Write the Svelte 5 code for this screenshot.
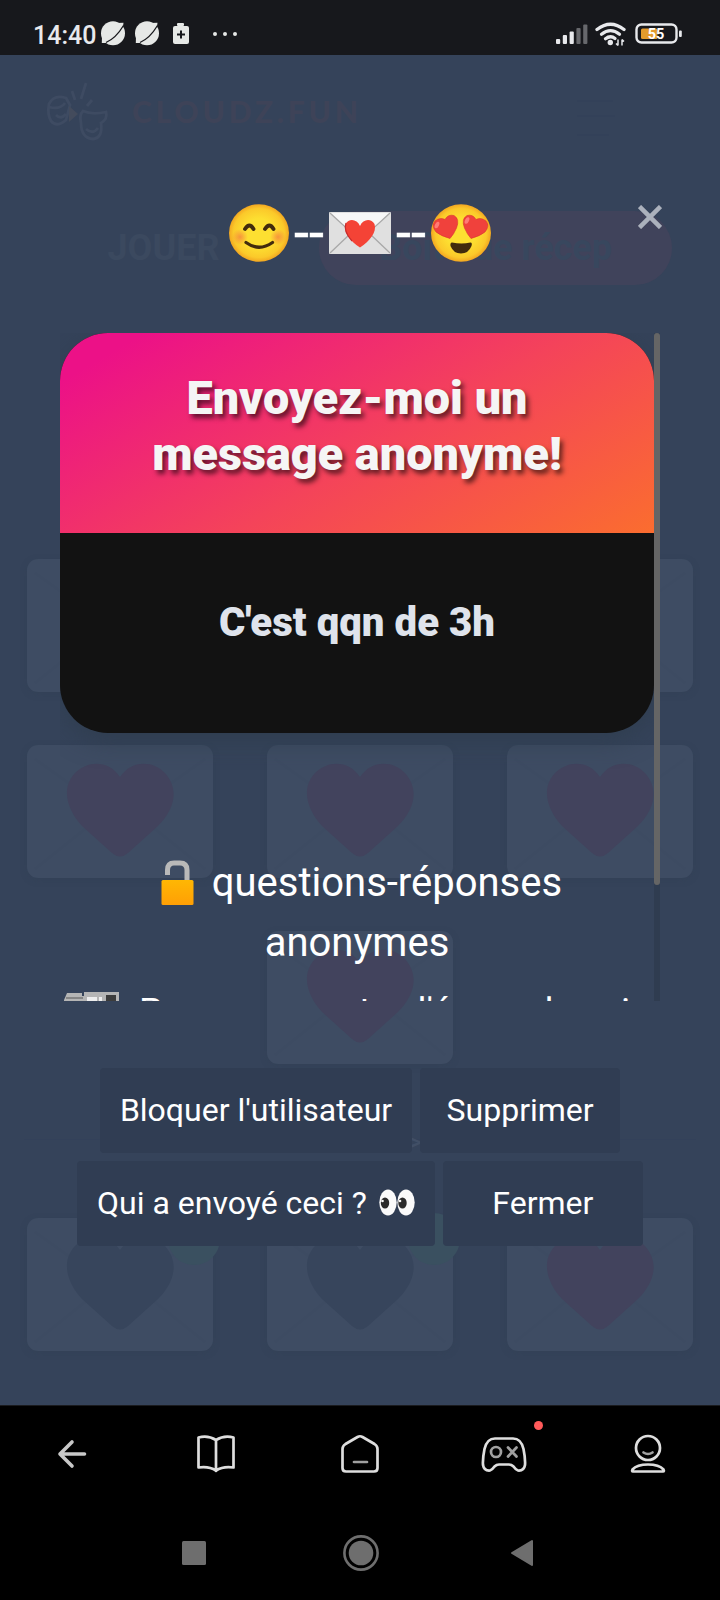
<script lang="ts">
  type Card = { column: number; opened?: boolean };

  const recent: Card[] = [
    { column: 1 }, { column: 2 }, { column: 3 },
    { column: 1 }, { column: 2 }, { column: 3 },
    { column: 2 },
  ];

  const older: Card[] = [
    { column: 1, opened: true },
    { column: 2, opened: true },
    { column: 3 },
  ];

  const signal = [5, 9, 12.5, 16, 19.5];
</script>

{#snippet planet()}
  <svg class="planet" width="26" height="26" viewBox="0 0 26 26">
    <circle cx="13" cy="12.3" r="12" fill="#e6e8e6" />
    <path d="M2 15L1.8 22 8 22zM16 2L23.500 1.8 22.500 9z" fill="#e6e8e6" />
    <path d="M6 21.5C13 18.500 19 12 23.500 4.500" fill="none" stroke="#17181c" stroke-width="1.3" />
  </svg>
{/snippet}

{#snippet envelopes(cards: Card[])}
  <div class="envelopes">
    {#each cards as card}
      <div class="envelope" style="grid-column: {card.column}">
        <svg width="186" height="133" viewBox="0 0 186 133">
          <path d="M8 14L75 62M178 14L111 62M8 124L68 76M178 124L118 76" stroke="#3a485f" stroke-width="2" opacity=".12" />
          <path
            d="M93 32C82 15 61 15 48 28C33 44 41 66 55 81L85 108Q93 115 101 108L131 81C147 65 153 45 138 28C126 15 104 15 93 32Z"
            fill={card.opened ? '#37455c' : '#42435d'}
          />
        </svg>
        {#if card.opened}
          <span class="badge"></span>
        {/if}
      </div>
    {/each}
  </div>
{/snippet}

<div class="phone">
  <header class="status">
    <span class="clock">14:40</span>
    {@render planet()}
    {@render planet()}
    <svg class="battery-saver" width="18" height="22" viewBox="0 0 18 22">
      <rect x="5" y="0" width="7" height="3" rx="1" fill="#e6e8e6" />
      <rect x="1" y="3" width="16" height="18" rx="2" fill="#e6e8e6" />
      <path d="M9 7.5v8M5 11.5h8" stroke="#17181c" stroke-width="2" />
    </svg>
    <svg class="more" width="26" height="6" viewBox="0 0 26 6" fill="#e6e8e6">
      <circle cx="3" cy="3" r="2" /><circle cx="13" cy="3" r="2" /><circle cx="23" cy="3" r="2" />
    </svg>
    <div class="status-right">
      <svg width="32" height="22" viewBox="0 0 32 22">
        {#each signal as height, i}
          <rect x={i * 6.8} y={21 - height} width="4.2" {height} rx="1" fill={i < 3 ? '#e8e9ec' : '#67686c'} />
        {/each}
      </svg>
      <svg class="wifi" width="31" height="25" viewBox="0 0 31 25">
        <g fill="none" stroke="#e8e9ec" stroke-width="3.3" stroke-linecap="round">
          <path d="M2 7.500Q15.500-3 29 7.500" />
          <path d="M6.500 12.300Q15.500 5 24.500 12.300" />
          <path d="M10.500 16.800Q15.500 12.800 20 16.500" />
        </g>
        <circle cx="15.3" cy="20.500" r="2.700" fill="#e8e9ec" />
        <path d="M23 17.500v6M27 17.500v6M21 21.500l2 2M29 19.500l-2-2" stroke="#e8e9ec" stroke-width="1.500" fill="none" />
      </svg>
      <svg width="48" height="22" viewBox="0 0 48 22">
        <rect x="1.5" y="1.5" width="40" height="18" rx="5" fill="none" stroke="#e8e9ec" stroke-width="2.4" />
        <rect x="6" y="5.500" width="16.500" height="10.500" rx="1.500" fill="#e39a2c" />
        <rect x="44" y="7.500" width="2.800" height="6.500" rx="1" fill="#e8e9ec" />
        <text x="21" y="15.600" text-anchor="middle" class="battery-text">55</text>
      </svg>
    </div>
  </header>

  <main class="page">
    <div class="background">
      <div class="brand">
        <svg width="66" height="62" viewBox="0 0 66 62" fill="none" stroke="#3e4b62" stroke-width="2.800">
          <path d="M4 24Q9 14 21 18L25 25 21 40Q12 48 6 41Q2 34 4 24ZM4 27Q15 30 20 23" />
          <path d="M24 26L33 34 24 42Z" fill="#434b5c" stroke="none" />
          <path d="M38 31Q47 35 61 32Q63 39 56 43Q58 58 48 59Q36 58 36 43Q34 35 38 31Z" />
          <path d="M11 35q5 5 10-1M41 49q7 6 12-1M27 11l3 9M41 3l-5 16M47 20l-5 6" />
        </svg>
        <span>CLOUDZ.FUN</span>
        <svg class="menu" width="40" height="40" viewBox="0 0 40 40" stroke="#334158" stroke-width="1">
          <path d="M1 4h36M1 19h38M1 38h32" />
        </svg>
      </div>
      <div class="tabs">
        <div class="tab play">JOUER</div>
        <div class="tab inbox">Boîte de récep</div>
      </div>
      {@render envelopes(recent)}
      <div class="divider"><span>&gt;</span></div>
      {@render envelopes(older)}
    </div>

    <div class="modal">
      <div class="modal-head">
        <svg width="60" height="58" viewBox="0 0 60 58">
          <defs>
            <radialGradient id="face">
              <stop offset=".5" stop-color="#fddf31" />
              <stop offset=".85" stop-color="#fbc92a" />
              <stop offset="1" stop-color="#f2a621" />
            </radialGradient>
            <radialGradient id="cheek">
              <stop offset="0" stop-color="#f5803f" stop-opacity=".75" />
              <stop offset="1" stop-color="#f5803f" stop-opacity="0" />
            </radialGradient>
          </defs>
          <ellipse cx="30" cy="29" rx="30" ry="28.800" fill="url(#face)" />
          <circle cx="11" cy="33" r="8" fill="url(#cheek)" />
          <circle cx="49" cy="33" r="8" fill="url(#cheek)" />
          <g fill="none" stroke="#422b0d" stroke-width="3.800" stroke-linecap="round">
            <path d="M16 25q4.500-7 8.500 0M36 25q4.500-7 8.500 0" />
            <path d="M17 38.500Q30 48 43.500 38.500" stroke-width="3.200" />
          </g>
        </svg>
        <span class="dashes">--</span>
        <svg class="letter" width="62" height="42" viewBox="0 0 62 42">
          <rect width="62" height="42" rx="1" fill="#e0e0e0" />
          <path d="M1 1h60L36 26Q31 30 26 26z" fill="#f7f7f7" />
          <path d="M1 1L26 24M61 1L36 24M1 41L21 22M61 41L41 22" stroke="#a9a9a9" stroke-width="1.300" />
          <path d="M31 14C28 7 20 6 16.500 12C14 20 21 29 31 35.500C41 29 48 20 45.500 12C42 6 34 7 31 14Z" fill="#f44336" />
          <path d="M17 11Q14 19 23 29" fill="none" stroke="#c72c2c" stroke-width="1.200" />
        </svg>
        <span class="dashes">--</span>
        <svg width="60" height="58" viewBox="0 0 60 58">
          <ellipse cx="30" cy="29" rx="30" ry="28.800" fill="url(#face)" />
          <path d="M21 38.500q9.500 2 18.500 0q2 0 1 3.500q-3 7.500-10.500 7.500t-10.500-7.500q-.500-3.500 1.500-3.500z" fill="#422b0d" />
          <g fill="#f0413c" stroke="#d8362f" stroke-width=".600">
            <path d="M14 15.500Q17 10 23 11.500Q29 15 25.500 24Q23 30 19 34.500Q10 32 5 28Q0 22 4 17Q9 13 14 15.500Z" />
            <path d="M45 15.500Q42 10 36 11.500Q30 15 33.500 24Q36 30 40 34.500Q49 32 54 28Q59 22 55 17Q50 13 45 15.500Z" />
          </g>
          <g fill="#ff7b75">
            <ellipse cx="6" cy="21" rx="2" ry="3.500" transform="rotate(25 6 21)" />
            <ellipse cx="36" cy="16.500" rx="2" ry="3.500" transform="rotate(25 36 16.500)" />
          </g>
        </svg>
        <button type="button" class="close" aria-label="Fermer">
          <svg width="24" height="24" viewBox="0 0 24 24" stroke="#abb1bc" stroke-width="4.500">
            <path d="M1.500 1.500L22.500 22.500M22.500 1.500L1.500 22.500" />
          </svg>
        </button>
      </div>

      <div class="scroller">
        <div class="content">
          <article class="message">
            <h2>Envoyez-moi un<br />message anonyme!</h2>
            <p>C'est qqn de 3h</p>
          </article>
          <div class="promo">
            <svg class="lock" width="33" height="46" viewBox="0 0 33 46">
              <defs>
                <linearGradient id="gold" x2="0" y2="1">
                  <stop offset="0" stop-color="#ffb703" />
                  <stop offset="1" stop-color="#ff9f05" />
                </linearGradient>
              </defs>
              <path d="M6.500 15V10Q6.500 3 13 3H19Q26 3 26 10V20" fill="none" stroke="#b9b9b9" stroke-width="5" />
              <rect x=".500" y="20" width="32" height="25" rx="1.500" fill="url(#gold)" />
            </svg>
            <span>questions-réponses</span><br />anonymes
          </div>
          <div class="news">
            <svg width="56" height="50" viewBox="0 0 56 50">
              <path d="M3 1H18V4H20V0H55V50H0V8z" fill="#b5b5b5" />
              <path d="M2 5H19V7H2z" fill="#858585" />
              <rect x="23" y="5" width="10" height="5" fill="#eee" />
              <rect x="35" y="5" width="3" height="5" fill="#eee" />
              <rect x="42" y="3" width="10" height="9" fill="#3c3c3c" />
            </svg>
            <span>Pour augmenter, l'écran de voir</span>
          </div>
        </div>
        <div class="scrollbar"><div class="thumb"></div></div>
      </div>

      <div class="actions">
        <button type="button">Bloquer l'utilisateur</button>
        <button type="button">Supprimer</button>
      </div>
      <div class="actions second">
        <button type="button">
          Qui a envoyé ceci ?
          <svg class="eyes" width="36" height="27" viewBox="0 0 36 27">
            <ellipse cx="9" cy="13.500" rx="8.700" ry="13" fill="#fafafa" />
            <ellipse cx="27" cy="13.500" rx="8.700" ry="13" fill="#fafafa" />
            <ellipse cx="6" cy="14" rx="4.200" ry="5.600" fill="#2b2b2b" />
            <ellipse cx="23.500" cy="14" rx="4.200" ry="5.600" fill="#2b2b2b" />
            <circle cx="3.500" cy="12" r="1.300" fill="#fafafa" />
            <circle cx="21" cy="12" r="1.300" fill="#fafafa" />
          </svg>
        </button>
        <button type="button">Fermer</button>
      </div>
    </div>
  </main>

  <nav class="app-nav">
    <div class="nav-item">
      <svg width="40" height="40" viewBox="0 0 40 40">
        <path d="M32.500 20H8M20 8L8 20L20 32" />
      </svg>
    </div>
    <div class="nav-item">
      <svg width="40" height="40" viewBox="0 0 40 40">
        <path d="M20 6Q12 1 2.500 3.500V33.500Q13 32 20 36.500Q27 32 37.500 33.500V3.500Q28 1 20 6ZM20 6V37" />
      </svg>
    </div>
    <div class="nav-item">
      <svg width="40" height="40" viewBox="0 0 40 40">
        <path d="M17.500 3Q20 1.500 22.500 3L34.500 10Q37.500 12 37.500 15V34Q37.500 37.500 34 37.500H6Q2.500 37.500 2.500 34V15Q2.500 12 5.500 10Z" />
        <path d="M14 28H27" class="dim" />
      </svg>
    </div>
    <div class="nav-item">
      <svg width="46" height="40" viewBox="0 0 46 40">
        <path d="M14 4.500H32Q40 4.500 42.500 15Q44.500 25 44 31Q43 37 37 36.500Q35 36 32.500 32.500Q30.500 30.500 28 30.500H18Q15.500 30.500 13.500 32.500Q11 36 9 36.500Q3 37 2 31Q1.500 25 3.500 15Q6 4.500 14 4.500Z" />
        <circle cx="15" cy="18" r="5" class="dim" />
        <path d="M27 13.500L35.500 22.500M35.500 13.500L27 22.500" class="dim" />
      </svg>
      <span class="dot"></span>
    </div>
    <div class="nav-item">
      <svg width="40" height="40" viewBox="0 0 40 40">
        <circle cx="20" cy="14" r="12" />
        <path d="M15.500 18.500Q20 21.500 24.500 18.500" class="dim" />
        <path d="M5 37.500Q3.500 37.500 4.500 35.500Q9 30.500 20 30.500T35.500 35.500Q36.500 37.500 35 37.500Z" />
      </svg>
    </div>
  </nav>

  <footer class="system-nav">
    <svg width="24" height="24" viewBox="0 0 24 24"><rect width="24" height="24" rx="1.500" fill="#6e6e6e" /></svg>
    <svg class="home" width="36" height="36" viewBox="0 0 36 36">
      <circle cx="18" cy="18" r="16.600" fill="none" stroke="#6e6e6e" stroke-width="2.600" />
      <circle cx="18" cy="18" r="12.300" fill="#6e6e6e" />
    </svg>
    <svg width="24" height="28" viewBox="0 0 24 28">
      <path d="M22 2V26L2 14Z" fill="#6e6e6e" stroke="#6e6e6e" stroke-width="2" stroke-linejoin="round" />
    </svg>
  </footer>
</div>

<style>
  :global(body) {
    margin: 0;
    background: #000;
  }

  .phone {
    width: 720px;
    height: 1600px;
    display: flex;
    flex-direction: column;
    overflow: hidden;
    font-family: Roboto, 'Liberation Sans', sans-serif;
    color: #fff;
  }

  svg {
    display: block;
    flex: none;
  }

  /* status bar */
  .status {
    height: 55px;
    box-sizing: border-box;
    padding: 13px 37px 0 33px;
    display: flex;
    align-items: center;
    background: #17181c;
  }

  .clock {
    width: 67px;
    font-size: 25px;
    font-weight: 500;
    line-height: 42px;
    color: #e8e9ec;
    padding-top: 4px;
  }

  .planet {
    margin-right: 8px;
  }

  .battery-saver {
    margin-left: 4px;
  }

  .more {
    margin-left: 22px;
  }

  .status-right {
    margin-left: auto;
    display: flex;
    align-items: center;
  }

  .wifi {
    margin: 1px 9px 0 7px;
  }

  .battery-text {
    font-size: 14.5px;
    font-weight: 700;
    fill: #fff;
  }

  /* page behind the dialog */
  .page {
    position: relative;
    height: 1350px;
    flex: none;
    background: #35435a;
  }

  .brand {
    height: 156px;
    box-sizing: border-box;
    padding: 25px 0 0 45px;
    display: flex;
    align-items: flex-start;
  }

  .brand span {
    margin: 13px 0 0 21px;
    width: 440px;
    font-family: Lato, sans-serif;
    font-size: 30px;
    line-height: 36px;
    font-weight: 900;
    letter-spacing: 3.8px;
    color: #3e4358;
  }

  .menu {
    margin: 17px 0 0 4px;
  }

  .tabs {
    height: 74px;
    padding-left: 48px;
    display: flex;
    font-size: 36px;
    font-weight: 700;
    line-height: 74px;
    text-align: center;
  }

  .tab {
    border-radius: 37px;
  }

  .play {
    width: 231px;
    color: #3b495f;
  }

  .inbox {
    width: 353px;
    margin-left: 40px;
    background: #40435b;
    color: #38475e;
  }

  .envelopes {
    display: grid;
    grid-template-columns: repeat(3, 186px);
    gap: 53px 54px;
    padding-left: 27px;
  }

  .tabs + .envelopes {
    padding-top: 274px;
  }

  .envelope {
    position: relative;
    height: 133px;
    border-radius: 11px;
    background: #3e4c63;
    box-shadow: 0 2px 6px rgba(48, 62, 82, 0.35);
  }

  .badge {
    position: absolute;
    top: -5px;
    right: -7px;
    width: 52px;
    height: 52px;
    border-radius: 50%;
    background: #3a5060;
  }

  .divider {
    height: 78px;
    margin: 75px 24px 0;
    border-top: 1px solid #33415a;
  }

  .divider span {
    display: block;
    width: 10px;
    margin: -16px 0 0 382px;
    font-size: 30px;
    line-height: 36px;
    color: #414f66;
  }

  /* dialog */
  .modal {
    position: absolute;
    inset: 0;
    display: flex;
    flex-direction: column;
  }

  .modal-head {
    position: relative;
    height: 278px;
    box-sizing: border-box;
    padding-top: 149px;
    display: flex;
    justify-content: center;
    align-items: flex-start;
  }

  .dashes {
    width: 40px;
    font-size: 54px;
    line-height: 58px;
    text-align: center;
    -webkit-text-stroke: 0.4px #fff;
  }

  .letter {
    margin-top: 8px;
  }

  .close {
    position: absolute;
    top: 150px;
    right: 58px;
    padding: 0;
    border: none;
    background: none;
  }

  .scroller {
    height: 668px;
    flex: none;
    margin: 0 60px;
    display: flex;
    overflow: hidden;
  }

  .content {
    width: 594px;
  }

  .message {
    height: 400px;
    border-radius: 48px;
    overflow: hidden;
    background: #121212;
    box-shadow: 0 8px 24px rgba(45, 60, 75, 0.7);
  }

  .message h2 {
    height: 200px;
    box-sizing: border-box;
    margin: 0;
    padding-top: 37px;
    font-size: 46.8px;
    font-weight: 900;
    line-height: 56px;
    text-align: center;
    color: #f5f5f5;
    text-shadow: 3px 4px 5px rgba(0, 0, 0, 0.6);
    background: linear-gradient(150deg, #ec1187 9%, #f4435a 55%, #fb6d2f 100%);
  }

  .message p {
    margin: 0;
    padding-top: 60px;
    font-size: 40.2px;
    font-weight: 900;
    line-height: 60px;
    text-align: center;
    color: #dfe3eb;
  }

  .promo {
    padding-top: 120px;
    font-size: 40px;
    line-height: 60px;
    text-align: center;
  }

  .lock {
    display: inline-block;
    vertical-align: -10px;
    margin: 0 8px 0 9px;
  }

  .news {
    margin: 19px -60px 0 4px;
    display: flex;
    gap: 19px;
    font-size: 37px;
    line-height: 40px;
    white-space: nowrap;
  }

  .scrollbar {
    width: 6px;
    background: #2f3c50;
  }

  .thumb {
    height: 552px;
    border-radius: 3px;
    background: #656565;
  }

  .actions {
    display: flex;
    justify-content: center;
    gap: 8px;
    margin-top: 67px;
  }

  .actions.second {
    margin-top: 8px;
  }

  .actions button {
    min-width: 200px;
    height: 85px;
    padding: 0 20px 2px;
    display: flex;
    align-items: center;
    justify-content: center;
    gap: 12px;
    border: none;
    border-radius: 4px;
    background: #303d53;
    color: #fff;
    font: 32px/40px Roboto, sans-serif;
  }

  /* bottom bars */
  .app-nav {
    display: grid;
    grid-template-columns: repeat(5, 144px);
    height: 96px;
    box-sizing: border-box;
    border-top: 1px solid #1a1b1e;
    background: #000;
  }

  .nav-item {
    position: relative;
    display: flex;
    align-items: center;
    justify-content: center;
  }

  .nav-item svg {
    fill: none;
    stroke: #dedede;
    stroke-width: 2.7;
    stroke-linecap: round;
    stroke-linejoin: round;
  }

  .nav-item:first-child svg {
    stroke: #c8c8c8;
    stroke-width: 3.6;
  }

  .nav-item .dim {
    stroke: #a0a0a0;
  }

  .dot {
    position: absolute;
    top: 15px;
    left: 102px;
    width: 9px;
    height: 9px;
    border-radius: 50%;
    background: #ff5a5a;
  }

  .system-nav {
    flex: 1;
    display: flex;
    align-items: center;
    justify-content: space-between;
    padding: 4px 186px 0 182px;
    background: #000;
  }

  .home {
    margin-left: 5px;
  }
</style>
